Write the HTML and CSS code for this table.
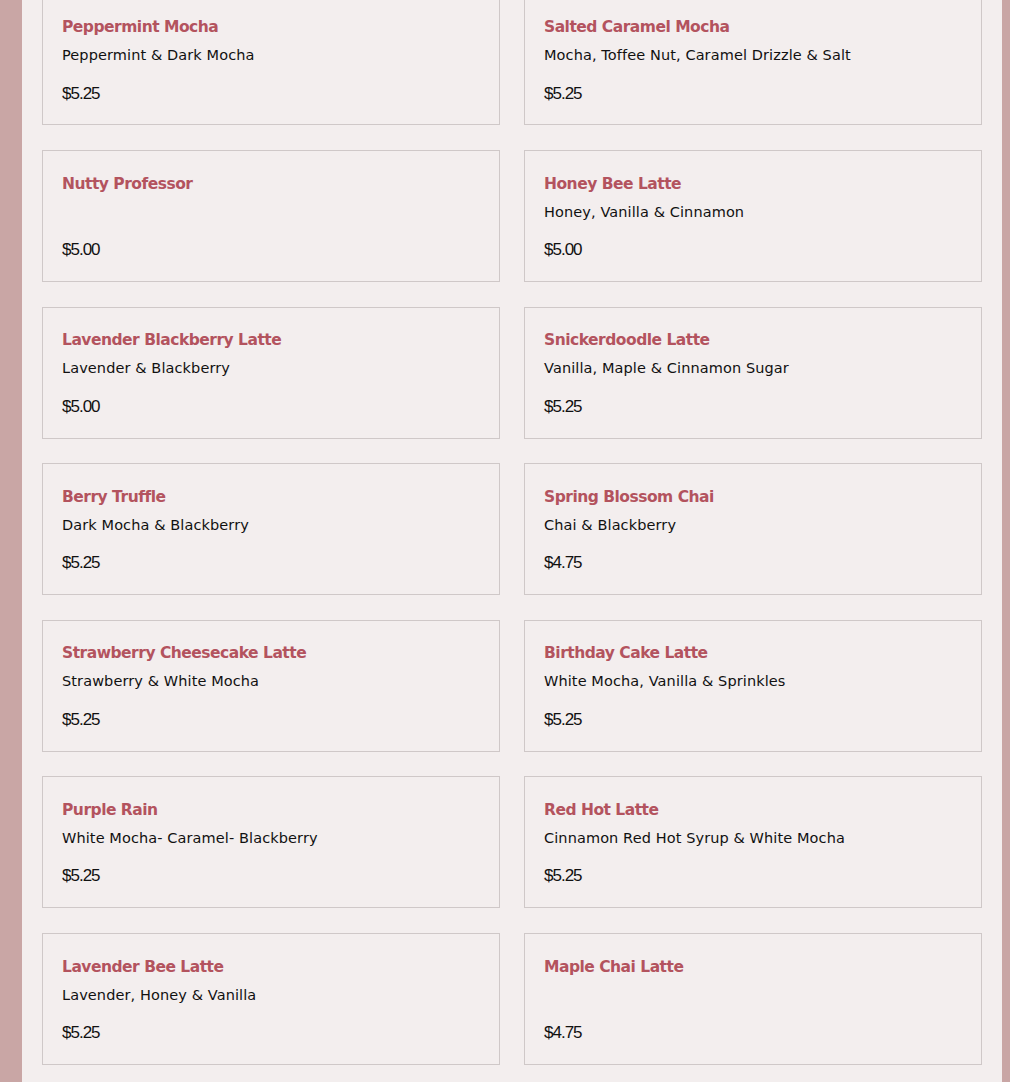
FILE: index.html
```
<!DOCTYPE html>
<html>
<head>
<meta charset="utf-8">
<link rel="stylesheet" href="styles.css">
</head>
<body>
<div class="frame">
  <main class="menu">
    <div class="card"><h3 class="name">Peppermint Mocha</h3><p class="desc">Peppermint &amp; Dark Mocha</p><p class="price">$5.25</p></div>
    <div class="card"><h3 class="name">Salted Caramel Mocha</h3><p class="desc">Mocha, Toffee Nut, Caramel Drizzle &amp; Salt</p><p class="price">$5.25</p></div>
    <div class="card"><h3 class="name">Nutty Professor</h3><p class="desc"></p><p class="price">$5.00</p></div>
    <div class="card"><h3 class="name">Honey Bee Latte</h3><p class="desc">Honey, Vanilla &amp; Cinnamon</p><p class="price">$5.00</p></div>
    <div class="card"><h3 class="name">Lavender Blackberry Latte</h3><p class="desc">Lavender &amp; Blackberry</p><p class="price">$5.00</p></div>
    <div class="card"><h3 class="name">Snickerdoodle Latte</h3><p class="desc">Vanilla, Maple &amp; Cinnamon Sugar</p><p class="price">$5.25</p></div>
    <div class="card"><h3 class="name">Berry Truffle</h3><p class="desc">Dark Mocha &amp; Blackberry</p><p class="price">$5.25</p></div>
    <div class="card"><h3 class="name">Spring Blossom Chai</h3><p class="desc">Chai &amp; Blackberry</p><p class="price">$4.75</p></div>
    <div class="card"><h3 class="name">Strawberry Cheesecake Latte</h3><p class="desc">Strawberry &amp; White Mocha</p><p class="price">$5.25</p></div>
    <div class="card"><h3 class="name">Birthday Cake Latte</h3><p class="desc">White Mocha, Vanilla &amp; Sprinkles</p><p class="price">$5.25</p></div>
    <div class="card"><h3 class="name">Purple Rain</h3><p class="desc">White Mocha- Caramel- Blackberry</p><p class="price">$5.25</p></div>
    <div class="card"><h3 class="name">Red Hot Latte</h3><p class="desc">Cinnamon Red Hot Syrup &amp; White Mocha</p><p class="price">$5.25</p></div>
    <div class="card"><h3 class="name">Lavender Bee Latte</h3><p class="desc">Lavender, Honey &amp; Vanilla</p><p class="price">$5.25</p></div>
    <div class="card"><h3 class="name">Maple Chai Latte</h3><p class="desc"></p><p class="price">$4.75</p></div>
  </main>
</div>
</body>
</html>
```
FILE: styles.css
```
html, body {
  margin: 0;
  padding: 0;
  background: #c9a6a5;
  height: 1082px;
  overflow: hidden;
}
.frame {
  display: flow-root;
  margin: 0 8px 0 22px;
  background: #f3eeee;
  height: 1082px;
  padding: 0 20px;
}
.menu {
  display: grid;
  grid-template-columns: 458px 458px;
  column-gap: 24px;
  row-gap: 24.6px;
  margin-top: -6.6px;
}
.card {
  border: 1px solid #cfc8c8;
  box-sizing: border-box;
  height: 132px;
  padding: 20.6px 19px 0 19px;
  display: flex;
  flex-direction: column;
}
.name {
  margin: 0;
  font-family: "DejaVu Sans", sans-serif;
  font-weight: bold;
  font-size: 15.5px;
  letter-spacing: -0.5px;
  color: #b3535e;
  height: 24px;
  line-height: 24px;
}
.desc {
  margin: 6px 0 0;
  font-family: "DejaVu Sans", sans-serif;
  font-size: 14.5px;
  letter-spacing: 0.1px;
  color: #111;
  height: 20px;
  line-height: 20px;
}
.price {
  margin: 18.5px 0 0;
  font-family: "Liberation Sans", sans-serif;
  font-size: 17px;
  letter-spacing: -1px;
  color: #111;
  line-height: 20px;
}
```
